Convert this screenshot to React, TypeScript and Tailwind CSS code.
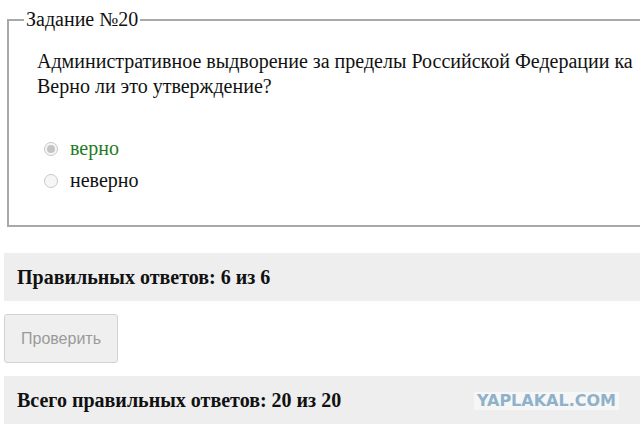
import type { JSX } from "react";

const serif = "font-['Liberation_Serif','Times_New_Roman',serif]";

function Radio({ checked }: { checked?: boolean }): JSX.Element {
	return (
		<span className="flex h-[14px] w-[14px] shrink-0 items-center justify-center rounded-full border border-[#c8c8c8] bg-[#f6f6f6]">
			{checked && <span className="h-[8px] w-[8px] rounded-full bg-[#c4c4c4]" />}
		</span>
	);
}

export default function App(): JSX.Element {
	return (
		<div className={`min-h-screen overflow-hidden bg-white pl-[4px] text-[#111] ${serif}`}>
			<fieldset className="mt-[8px] ml-[3px] w-[700px] border-2 border-[#a9a9a9] pb-[33px] pl-[28px]">
				<legend className="-ml-[13px] px-[2px] text-[20px] leading-[23px]">Задание №20</legend>
				<p className="mt-[18px] whitespace-nowrap text-[20px] leading-[25px]">
					Административное выдворение за пределы Российской Федерации ка
					<br />
					Верно ли это утверждение?
				</p>
				<div className="mt-[38px] flex flex-col gap-[9px] pl-[7px] text-[20px] leading-[23px]">
					<label className="flex items-center gap-[12px]">
						<Radio checked />
						<span className="text-[#1e7b1e]">верно</span>
					</label>
					<label className="flex items-center gap-[12px]">
						<Radio />
						<span>неверно</span>
					</label>
				</div>
			</fieldset>

			<div className="mt-[26px] flex h-[48px] items-center bg-[#eeeeee] pl-[13px] text-[20px] font-bold">
				Правильных ответов: 6 из 6
			</div>

			<button
				type="button"
				disabled
				className="mt-[13px] h-[49px] w-[114px] rounded-[3px] border border-[#d2d2d2] bg-[#efefef] font-['Liberation_Sans',Arial,sans-serif] text-[16px] text-[#9a9a9a]"
			>
				Проверить
			</button>

			<div className="mt-[13px] flex h-[48px] items-center justify-between bg-[#eeeeee] pl-[13px] text-[20px] font-bold">
				<span>Всего правильных ответов: 20 из 20</span>
				<span className="mt-[2px] mr-[21px] bg-[#f6f6f6] px-[3px] font-['DejaVu_Sans',sans-serif] text-[16px] leading-[18px] font-black text-[#8fb1c9]">
					YAPLAKAL.COM
				</span>
			</div>
		</div>
	);
}
